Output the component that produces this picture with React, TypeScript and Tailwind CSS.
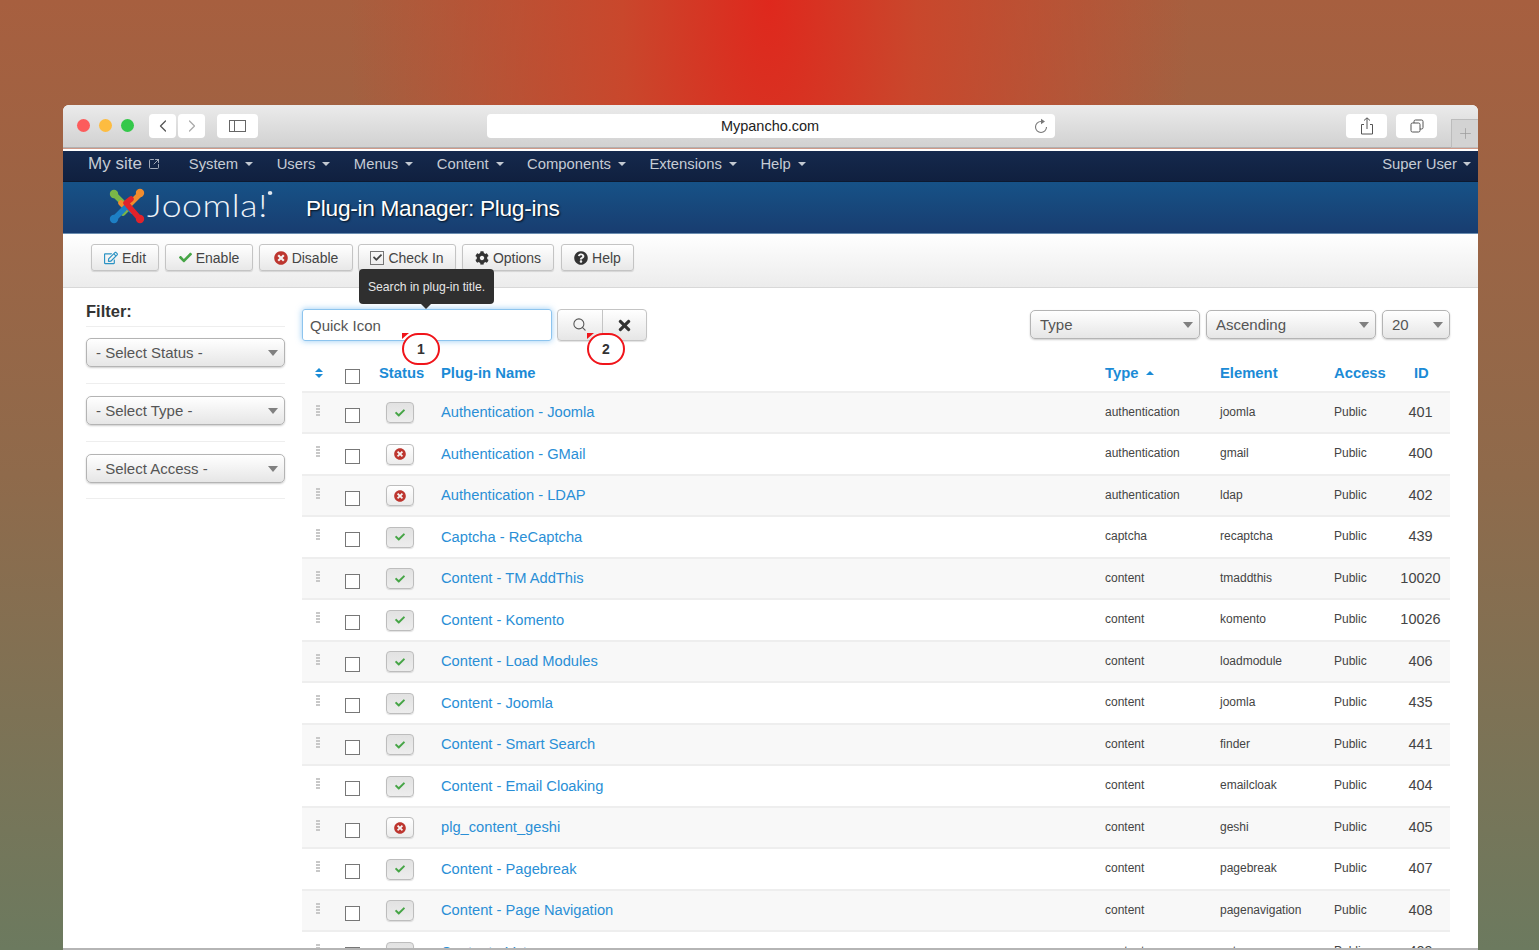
import React from 'react';
import { FaCheck, FaTimes, FaTimesCircle, FaCog, FaQuestionCircle, FaRegEdit } from 'react-icons/fa';
import { ChevronLeft, ChevronRight, Search, Plus, SquareArrowOutUpRight } from 'lucide-react';

const menus = ['System', 'Users', 'Menus', 'Content', 'Components', 'Extensions', 'Help'];

const rows = [
  { name: 'Authentication - Joomla', type: 'authentication', el: 'joomla', id: '401', on: true },
  { name: 'Authentication - GMail', type: 'authentication', el: 'gmail', id: '400', on: false },
  { name: 'Authentication - LDAP', type: 'authentication', el: 'ldap', id: '402', on: false },
  { name: 'Captcha - ReCaptcha', type: 'captcha', el: 'recaptcha', id: '439', on: true },
  { name: 'Content - TM AddThis', type: 'content', el: 'tmaddthis', id: '10020', on: true },
  { name: 'Content - Komento', type: 'content', el: 'komento', id: '10026', on: true },
  { name: 'Content - Load Modules', type: 'content', el: 'loadmodule', id: '406', on: true },
  { name: 'Content - Joomla', type: 'content', el: 'joomla', id: '435', on: true },
  { name: 'Content - Smart Search', type: 'content', el: 'finder', id: '441', on: true },
  { name: 'Content - Email Cloaking', type: 'content', el: 'emailcloak', id: '404', on: true },
  { name: 'plg_content_geshi', type: 'content', el: 'geshi', id: '405', on: false },
  { name: 'Content - Pagebreak', type: 'content', el: 'pagebreak', id: '407', on: true },
  { name: 'Content - Page Navigation', type: 'content', el: 'pagenavigation', id: '408', on: true },
  { name: 'Content - Vote', type: 'content', el: 'vote', id: '409', on: true },
];

const Caret = () => (
  <span className="inline-block w-0 h-0 border-x-[4.5px] border-x-transparent border-t-[4px] border-t-[#c3c9d2]" />
);

const SelectBox = ({ label, className }: { label: string; className: string }) => (
  <div className={`h-[29px] flex items-center justify-between pl-[9px] pr-[6px] rounded-[5px] border border-[#b4b4b4] bg-gradient-to-b from-white to-[#e6e6e6] shadow-[0_1px_2px_rgba(0,0,0,0.2)] text-[15px] text-[#555] ${className}`}>
    <span className="pt-[2px]">{label}</span>
    <span className="inline-block w-0 h-0 border-x-[5px] border-x-transparent border-t-[6px] border-t-[#808080]" />
  </div>
);

const ToolButton = ({ icon, label, className }: { icon: React.ReactNode; label: string; className: string }) => (
  <div className={`h-[27px] flex items-center justify-center gap-[4px] rounded-[3px] border border-[#c4c4c4] bg-gradient-to-b from-white to-[#e8e8e8] shadow-[0_1px_1px_rgba(0,0,0,0.12)] text-[14px] text-[#444] ${className}`}>
    {icon}
    <span className="pt-[1px]">{label}</span>
  </div>
);

const Checkbox = () => <div className="w-[15px] h-[15px] border border-[#777] bg-white shrink-0" />;

const Marker = ({ n, className }: { n: number; className: string }) => (
  <div className={`absolute w-[38px] h-[32px] rounded-full border-2 border-[#f0141a] bg-white flex items-center justify-center text-[14px] font-bold text-[#333] ${className}`}>
    {n}
  </div>
);

const Grip = () => (
  <div className="flex flex-col gap-[1px] w-[4px] items-center">
    {[0, 1, 2, 3].map((i) => <span key={i} className="block w-[4px] h-[2px] bg-[#c8c8c8]" />)}
  </div>
);

const JoomlaMark = () => (
  <svg width="36" height="36" viewBox="0 0 36 36" fill="none" strokeLinecap="round" strokeLinejoin="round">
    <path d="M6 7 L19 20 L14 25" stroke="#7ab648" strokeWidth="5.5" />
    <circle cx="5" cy="6" r="4.2" fill="#7ab648" />
    <path d="M30 7 L17 20 L12 15" stroke="#f18c2d" strokeWidth="5.5" />
    <circle cx="31" cy="5" r="4.2" fill="#f18c2d" />
    <path d="M6 30 L18 18 L23 23" stroke="#1d7fc4" strokeWidth="5.5" />
    <circle cx="5" cy="31" r="4.2" fill="#1d7fc4" />
    <path d="M30 30 L17 15 L22 11" stroke="#e1232b" strokeWidth="5.5" />
    <circle cx="31" cy="31" r="4.2" fill="#e1232b" />
  </svg>
);

export default function App() {
  return (
    <div className="h-[950px] overflow-hidden pt-[105px] pl-[63px] pr-[61px] bg-[radial-gradient(ellipse_420px_1150px_at_50%_0%,#df281d_0%,#c9472c_35%,rgba(165,96,64,0)_100%),linear-gradient(to_bottom,#a75f3f_0%,#8f6a4b_50%,#6c7a5f_100%)]" style={{ fontFamily: '"Liberation Sans", Arial, sans-serif' }}>
      <div className="relative h-[845px] overflow-hidden bg-white rounded-t-[6px] border-b-2 border-[#b5b5b5]">
        {/* browser chrome */}
        <div className="h-[43px] flex items-center pl-[14px] pr-0 bg-gradient-to-b from-[#ebebeb] to-[#d1d1d1] border-b border-[#b0b0b0]">
          <div className="flex gap-[9px] items-center -mt-[1px]">
            <span className="w-[13px] h-[13px] rounded-full bg-[#fc5c5c]" />
            <span className="w-[13px] h-[13px] rounded-full bg-[#fdbc40]" />
            <span className="w-[13px] h-[13px] rounded-full bg-[#34c84a]" />
          </div>
          <div className="ml-[15px] flex gap-[2px]">
            <div className="w-[27px] h-[24px] bg-white rounded-[4px] flex items-center justify-center">
              <ChevronLeft className="w-[20px] h-[20px] text-[#555]" strokeWidth={1.5} />
            </div>
            <div className="w-[27px] h-[24px] bg-white rounded-[4px] flex items-center justify-center">
              <ChevronRight className="w-[20px] h-[20px] text-[#aaa]" strokeWidth={1.5} />
            </div>
          </div>
          <div className="ml-[12px] w-[41px] h-[24px] bg-white rounded-[4px] flex items-center justify-center">
            <div className="w-[17px] h-[12px] border border-[#666] flex">
              <div className="w-[5px] border-r border-[#666]" />
            </div>
          </div>
          <div className="ml-[229px] w-[569px] h-[24px] bg-white rounded-[4px] flex items-center relative justify-center text-[14.5px] text-[#222]">
            <span className="-ml-[2px] pt-[2px]">Mypancho.com</span>
            <svg className="absolute right-[6px] top-[4px]" width="16" height="16" viewBox="0 0 16 16" fill="none">
              <path d="M8 3.5A5.5 5.5 0 1 0 13.5 9" stroke="#777" strokeWidth="1.1" />
              <path d="M8 0.8L12 3.5L8 6.2Z" fill="#777" />
            </svg>
          </div>
          <div className="ml-[291px] w-[41px] h-[24px] bg-white rounded-[4px] flex items-center justify-center">
            <svg width="14" height="18" viewBox="0 0 14 18" fill="none" stroke="#555" strokeWidth="1">
              <path d="M4 7.5H1.5V17h11V7.5H10M7 12V1M4 3.5L7 .8l3 2.7" />
            </svg>
          </div>
          <div className="ml-[9px] w-[41px] h-[24px] bg-white rounded-[4px] flex items-center justify-center">
            <svg width="14" height="14" viewBox="0 0 14 14" fill="none" stroke="#555" strokeWidth="1">
              <rect x="1" y="4" width="9" height="9" rx="1.5" />
              <path d="M4 4V2.5A1.5 1.5 0 0 1 5.5 1H11.5A1.5 1.5 0 0 1 13 2.5V8.5A1.5 1.5 0 0 1 11.5 10H10" />
            </svg>
          </div>
          <div className="ml-[14px] mt-[14px] w-[27px] h-[29px] border border-[#bcbcbc] border-r-0 bg-[#d3d3d3] flex items-center justify-center">
            <Plus className="w-[17px] h-[17px] text-[#999]" strokeWidth={1} />
          </div>
        </div>
        <div className="h-[3px] bg-white border-t border-[#cf9a8a]" />

        {/* admin nav */}
        <div className="h-[31px] flex items-center justify-between pb-[4px] bg-gradient-to-b from-[#15294d] to-[#10203f] text-[14.8px] text-[#c6ccd5] border-b border-[#0d1a30]">
          <div className="flex items-center">
            <span className="ml-[25px] text-[17px] flex items-center gap-[6px]">
              My site
              <SquareArrowOutUpRight className="w-[12px] h-[12px]" strokeWidth={1.6} />
            </span>
            <div className="ml-[29px] flex items-center gap-[23.5px]">
              {menus.map((m) => (
                <span key={m} className="flex items-center gap-[7px]">
                  {m}
                  <Caret />
                </span>
              ))}
            </div>
          </div>
          <span className="mr-[7px] flex items-center gap-[6px]">
            Super User
            <Caret />
          </span>
        </div>

        {/* title bar */}
        <div className="h-[52px] flex items-center bg-gradient-to-b from-[#165287] to-[#183d70] border-b border-[#6b8db0]">
          <div className="ml-[46px] flex items-center w-[197px] -mt-[4px]">
            <JoomlaMark />
            <span className="relative inline-block origin-left scale-x-[1.15] ml-[2px] text-[31px] leading-none tracking-[0.5px] text-[#eef3f8] font-light" style={{ fontFamily: 'Lato, sans-serif' }}>
              Joomla!
              <span className="absolute -right-[4px] top-[1px] w-[4px] h-[4px] rounded-full bg-[#dfe7ef]" />
            </span>
          </div>
          <h1 className="pt-[2px] text-[22.7px] leading-none text-white tracking-[-0.3px] [text-shadow:1px_1px_2px_rgba(0,0,0,0.8)] font-normal">
            Plug-in Manager: Plug-ins
          </h1>
        </div>

        {/* toolbar */}
        <div className="h-[54px] flex items-start pt-[10px] pl-[28px] bg-gradient-to-b from-white to-[#ececec] border-b border-[#d8d8d8]">
          <ToolButton className="w-[68px]" label="Edit" icon={<FaRegEdit className="w-[14px] h-[14px] text-[#2b93c4]" />} />
          <ToolButton className="w-[88px] ml-[6px]" label="Enable" icon={<FaCheck className="w-[13px] h-[13px] text-[#46a546]" />} />
          <ToolButton className="w-[94px] ml-[6px]" label="Disable" icon={<FaTimesCircle className="w-[14px] h-[14px] text-[#bd362f]" />} />
          <ToolButton className="w-[98px] ml-[5px]" label="Check In" icon={
            <span className="w-[14px] h-[14px] border border-[#777] flex items-center justify-center">
              <FaCheck className="w-[9px] h-[9px] text-[#444]" />
            </span>
          } />
          <ToolButton className="w-[92px] ml-[6px]" label="Options" icon={<FaCog className="w-[14px] h-[14px] text-[#333]" />} />
          <ToolButton className="w-[73px] ml-[7px]" label="Help" icon={<FaQuestionCircle className="w-[14px] h-[14px] text-[#333]" />} />
        </div>

        {/* content */}
        <div className="relative flex pl-[23px] pr-[28px]">
          {/* sidebar */}
          <aside className="w-[199px] shrink-0 pt-[14px]">
            <div className="text-[16.5px] font-bold text-[#333] leading-[18px] pb-[6px] border-b border-[#eee]">Filter:</div>
            <div className="pt-[11px] pb-[16px] border-b border-[#eee]">
              <SelectBox label="- Select Status -" className="w-full" />
            </div>
            <div className="pt-[12px] pb-[16px] border-b border-[#eee]">
              <SelectBox label="- Select Type -" className="w-full" />
            </div>
            <div className="pt-[12px] pb-[15px] border-b border-[#eee]">
              <SelectBox label="- Select Access -" className="w-full" />
            </div>
          </aside>

          {/* main */}
          <main className="ml-[17px] flex-1 min-w-0">
            <div className="pt-[21px] flex items-start justify-between">
              <div className="flex items-center">
                <div className="w-[250px] h-[32px] rounded-[3px] border border-[#8dc4ee] shadow-[0_0_6px_rgba(82,168,236,0.6)] flex items-center pl-[7px] pt-[2px] text-[15px] text-[#555]">
                  Quick Icon
                </div>
                <div className="ml-[5px] h-[32px] w-[90px] flex rounded-[4px] border border-[#c4c4c4] bg-gradient-to-b from-white to-[#e6e6e6] shadow-[0_1px_1px_rgba(0,0,0,0.12)]">
                  <div className="w-[45px] border-r border-[#c4c4c4] flex items-center justify-center">
                    <Search className="w-[15px] h-[15px] text-[#555] -mt-[2px] -ml-[1px]" strokeWidth={1.7} />
                  </div>
                  <div className="flex-1 flex items-center justify-center">
                    <FaTimes className="w-[17px] h-[17px] text-[#333] -ml-[1px]" />
                  </div>
                </div>
              </div>
              <div className="flex gap-[6px] pt-[1px]">
                <SelectBox label="Type" className="w-[170px]" />
                <SelectBox label="Ascending" className="w-[170px]" />
                <SelectBox label="20" className="w-[68px]" />
              </div>
            </div>

            <div className="mt-[14px] h-[37.5px] flex items-center border-b-2 border-[#eee] text-[14.8px] font-bold text-[#1b8bd6]">
              <div className="w-[35px] shrink-0 pl-[13px] flex flex-col gap-[2px]">
                <span className="block w-0 h-0 border-x-[4px] border-x-transparent border-b-[4px] border-b-[#1b8bd6]" />
                <span className="block w-0 h-0 border-x-[4px] border-x-transparent border-t-[4px] border-t-[#1b8bd6]" />
              </div>
              <div className="w-[42px] shrink-0 pl-[8px] pt-[7px]"><Checkbox /></div>
              <div className="w-[62px] shrink-0">Status</div>
              <div className="w-[664px] shrink-0">Plug-in Name</div>
              <div className="w-[115px] shrink-0 flex items-center gap-[8px]">
                Type
                <span className="w-0 h-0 border-x-[4px] border-x-transparent border-b-[4px] border-b-[#1b8bd6]" />
              </div>
              <div className="w-[114px] shrink-0">Element</div>
              <div className="w-[68px] shrink-0">Access</div>
              <div className="pl-[12px]">ID</div>
            </div>

            {rows.map((r, i) => (
              <div key={r.name} className={`h-[41.5px] flex items-center border-b-2 border-[#eee] ${i % 2 === 0 ? 'bg-[#f8f8f8]' : 'bg-white'}`}>
                <div className="w-[35px] shrink-0 pl-[14px] -mt-[4px]"><Grip /></div>
                <div className="w-[42px] shrink-0 pl-[8px] pt-[6px]"><Checkbox /></div>
                <div className="w-[62px] shrink-0 pl-[7px] pt-[1px]">
                  <div className={`w-[28px] h-[21px] rounded-[4px] border border-[#bdbdbd] flex items-center justify-center shadow-[0_1px_1px_rgba(0,0,0,0.12)] ${r.on ? 'bg-gradient-to-b from-[#e2e2e2] to-[#ededed]' : 'bg-gradient-to-b from-white to-[#ececec]'}`}>
                    {r.on
                      ? <FaCheck className="w-[10px] h-[10px] text-[#46a546]" />
                      : <FaTimesCircle className="w-[12px] h-[12px] text-[#bd362f]" />}
                  </div>
                </div>
                <div className="w-[664px] shrink-0 text-[14.7px] text-[#2a8fd6]">{r.name}</div>
                <div className="w-[115px] shrink-0 pb-[1px] text-[12px] text-[#444]">{r.type}</div>
                <div className="w-[114px] shrink-0 pb-[1px] text-[12px] text-[#444]">{r.el}</div>
                <div className="w-[68px] shrink-0 pb-[1px] text-[12px] text-[#444]">Public</div>
                <div className="w-[37px] shrink-0 pt-[1px] flex justify-center whitespace-nowrap text-[14.5px] text-[#444]">{r.id}</div>
              </div>
            ))}
          </main>
        </div>

        {/* tooltip over the search field */}
        <div className="absolute left-[296px] top-[164px] w-[135px] h-[35px] rounded-[4px] bg-[#2f2f2f] flex items-center justify-center pt-[1px] text-[12.2px] text-[#e6e6e6]">
          Search in plug-in title.
          <span className="absolute left-[62px] -bottom-[5px] w-0 h-0 border-x-[5px] border-x-transparent border-t-[5px] border-t-[#2f2f2f]" />
        </div>

        {/* numbered callouts */}
        <span className="absolute left-[339px] top-[228px] w-0 h-0 border-r-[7px] border-r-transparent border-t-[6px] border-t-[#f0141a]" />
        <span className="absolute left-[524px] top-[228px] w-0 h-0 border-r-[7px] border-r-transparent border-t-[6px] border-t-[#f0141a]" />
        <Marker n={1} className="left-[339px] top-[228px]" />
        <Marker n={2} className="left-[524px] top-[228px]" />
      </div>
    </div>
  );
}
